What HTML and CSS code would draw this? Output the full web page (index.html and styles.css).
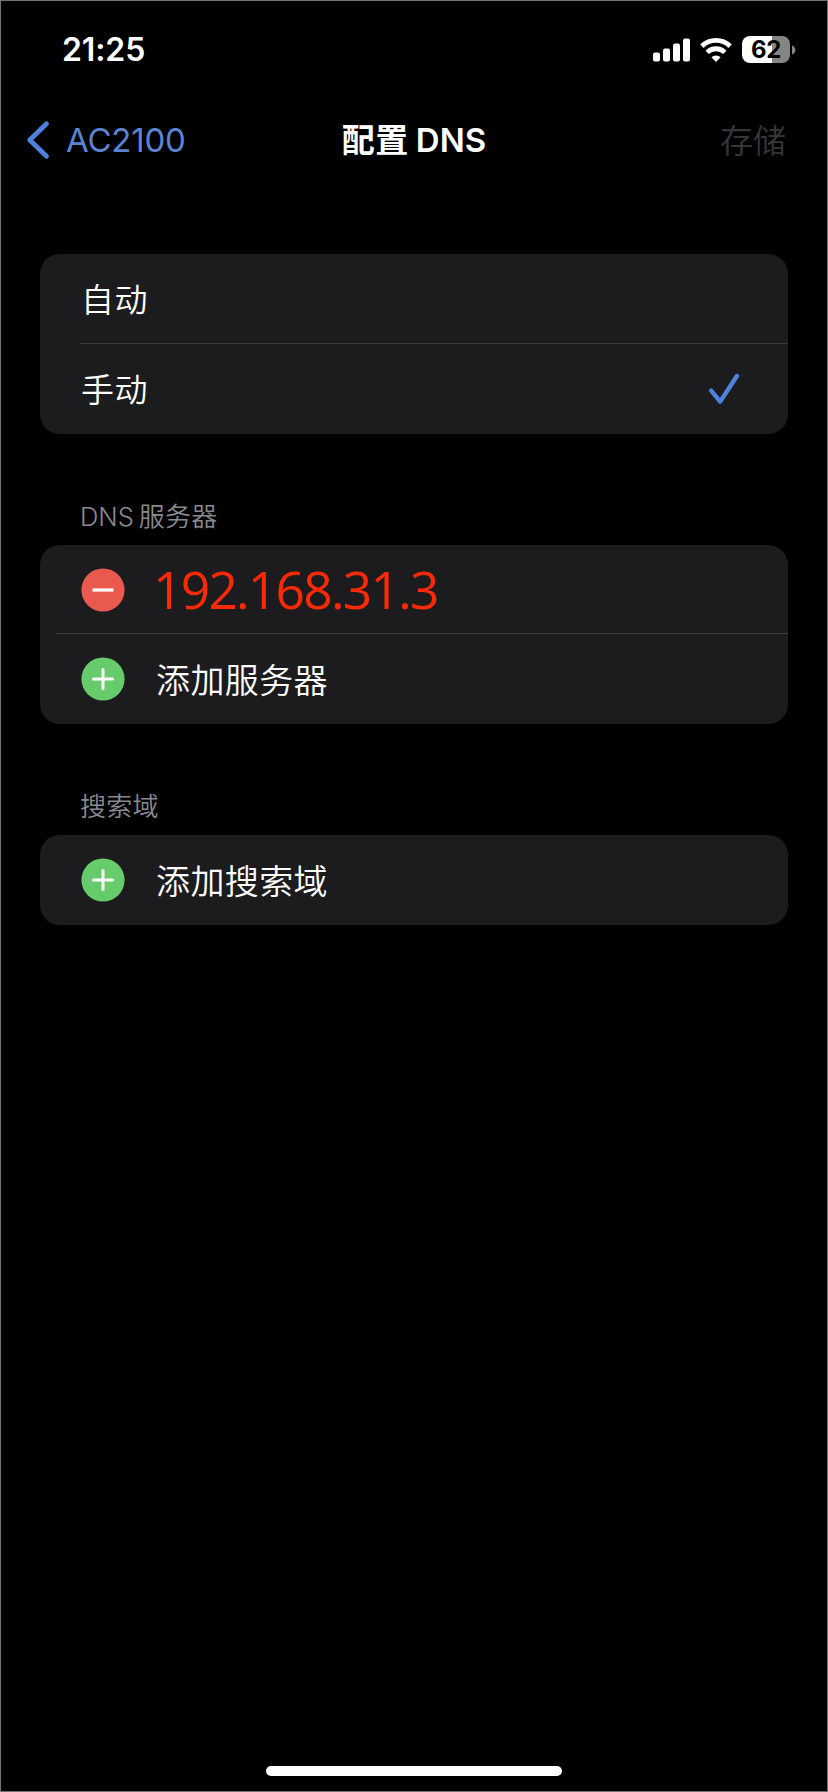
FILE: index.html
```html
<!DOCTYPE html>
<html lang="zh-CN">
<head>
<meta charset="utf-8">
<title>配置 DNS</title>
<link rel="stylesheet" href="styles.css">
</head>
<body>
<div class="screen">
  <header class="status">
    <span class="time">21:25</span>
    <div class="indicators">
      <svg class="signal" width="38" height="24" viewBox="0 0 38 24" fill="#fff">
        <rect x="0" y="14.5" width="7" height="9" rx="2"/>
        <rect x="10" y="10.5" width="7" height="13" rx="2"/>
        <rect x="20" y="5.5" width="7" height="18" rx="2"/>
        <rect x="30" y="0.5" width="7" height="23" rx="2"/>
      </svg>
      <svg class="wifi" width="32" height="24" viewBox="0 0 32 24" fill="none" stroke="#fff" stroke-width="4.8">
        <path d="M1.9 8.2a20.2 20.2 0 0 1 28.2 0"/>
        <path d="M7.2 14.4a12.4 12.4 0 0 1 17.6 0"/>
        <path d="M16 24l-4.6-4.7a6.5 6.5 0 0 1 9.2 0z" fill="#fff" stroke="none"/>
      </svg>
      <div class="battery"><span class="level">62</span>
        <svg class="tip" width="4" height="10" viewBox="0 0 4 10"><path d="M0 0.5Q3.4 2 3.4 5T0 9.5z" fill="#858585"/></svg>
      </div>
    </div>
  </header>
  <nav class="nav">
    <a class="back">
      <svg width="24" height="40" viewBox="0 0 24 40" fill="none" stroke="#4c80dc" stroke-width="4.8" stroke-linecap="round" stroke-linejoin="round"><path d="M20.5 3.7L3.7 20l16.8 16.3"/></svg>
      <span class="back-label">AC2100</span>
    </a>
    <h1 class="title"><span class="title-cn">配置</span><span class="title-en">DNS</span></h1>
    <span class="save">存储</span>
  </nav>
  <main class="content">
    <section class="card">
      <div class="row"><span class="label option">自动</span></div>
      <div class="row line">
        <span class="label option">手动</span>
        <svg class="check" width="32" height="32" viewBox="0 0 32 32" fill="none" stroke="#4f82dd" stroke-width="4.4" stroke-linecap="round" stroke-linejoin="round"><path d="M3.2 17.6l9 11L28.9 3"/></svg>
      </div>
    </section>
    <h2 class="heading"><span class="heading-en">DNS</span><span>服务器</span></h2>
    <section class="card">
      <div class="row first">
        <svg class="badge" width="44" height="44" viewBox="0 0 44 44"><circle cx="22" cy="22" r="21.6" fill="#e9594d"/><path d="M11.5 22h21" stroke="#fff" stroke-width="3.2"/></svg>
        <span class="address">192.168.31.3</span>
      </div>
      <div class="row line wide">
        <svg class="badge" width="44" height="44" viewBox="0 0 44 44"><circle cx="22" cy="22" r="21.6" fill="#66cb6a"/><path d="M12.5 22h19M22 12.5v19" stroke="#fff" stroke-width="3" stroke-linecap="round"/></svg>
        <span class="label">添加服务器</span>
      </div>
    </section>
    <h2 class="heading"><span>搜索域</span></h2>
    <section class="card">
      <div class="row">
        <svg class="badge" width="44" height="44" viewBox="0 0 44 44"><circle cx="22" cy="22" r="21.6" fill="#66cb6a"/><path d="M12.5 22h19M22 12.5v19" stroke="#fff" stroke-width="3" stroke-linecap="round"/></svg>
        <span class="label">添加搜索域</span>
      </div>
    </section>
  </main>
  <div class="home"></div>
</div>
</body>
</html>
```
FILE: styles.css
```css
* { box-sizing: border-box; }
body { margin: 0; background: #000; }
.screen {
  width: 828px;
  height: 1792px;
  background: #000;
  border: 1px solid #747474;
  color: #fff;
  font-family: Inter, "Noto Sans CJK SC", sans-serif;
  display: flex;
  flex-direction: column;
}
.status {
  height: 97px;
  padding: 0 32px 0 61px;
  display: flex;
  align-items: center;
  justify-content: space-between;
}
.time { font-size: 32px; font-weight: 600; line-height: 40px; padding-top: 1px; letter-spacing: -0.1px; }
.indicators { display: flex; align-items: center; }
.wifi { margin-left: 9px; }
.battery {
  position: relative;
  margin: 0 5px 0 10px;
  width: 48px;
  height: 27px;
  border-radius: 8px;
  background: linear-gradient(90deg, #fff 62.5%, #858585 62.5%);
  display: flex;
  align-items: center;
  justify-content: center;
}
.level { color: #000; font-size: 24px; font-weight: 700; line-height: 27px; letter-spacing: -0.3px; }
.tip { position: absolute; left: 50px; top: 9px; }
.nav {
  height: 84px;
  padding: 0 25px;
  display: grid;
  grid-template-columns: 1fr auto 1fr;
  align-items: center;
}
.back { display: flex; align-items: center; gap: 16px; color: #5b83d2; }
.back-label { font-size: 33px; line-height: 40px; letter-spacing: -0.2px; }
.title { margin: 0; display: flex; align-items: center; gap: 7px; font-weight: 600; line-height: 40px; }
.title-cn { font-size: 33px; font-weight: 700; letter-spacing: 0.5px; }
.title-en { font-size: 33px; }
.save { justify-self: end; margin-right: 16px; padding-top: 1px; color: #363638; font-size: 33px; line-height: 40px; font-weight: 350; }
.content { padding: 72px 39px 0; }
.card { background: #1c1c1e; border-radius: 20px; }
.row {
  position: relative;
  height: 90px;
  padding: 0 48px 0 41px;
  display: flex;
  align-items: center;
}
.first { height: 89px; }
.line::before {
  content: "";
  position: absolute;
  top: -1px;
  left: 40px;
  right: 0;
  height: 1px;
  background: #3a3a3c;
}
.wide::before { left: 16px; top: -1px; }
.label { padding-top: 4px; font-size: 34px; font-weight: 350; letter-spacing: 0.4px; line-height: 44px; }
.option { padding-top: 2px; font-size: 33px; }
.check { margin-left: auto; }
.badge { margin-right: 31px; }
.heading {
  margin: 0;
  height: 111px;
  padding: 64px 0 0 40px;
  display: flex;
  gap: 5px;
  color: #8a8a8e;
  font-size: 26px;
  font-weight: 350;
  letter-spacing: 0.2px;
  line-height: 38px;
}
.heading-en { font-size: 25.5px; letter-spacing: 0; }
.address {
  margin: -2px 0 0 -3px;
  color: #fb2a05;
  font-family: "Open Sans", "Noto Sans", sans-serif;
  font-size: 51.5px;
  letter-spacing: -1.75px;
  line-height: 60px;
}
.home {
  width: 296px;
  height: 10px;
  margin: auto auto 15px;
  border-radius: 5px;
  background: #fff;
}
```
